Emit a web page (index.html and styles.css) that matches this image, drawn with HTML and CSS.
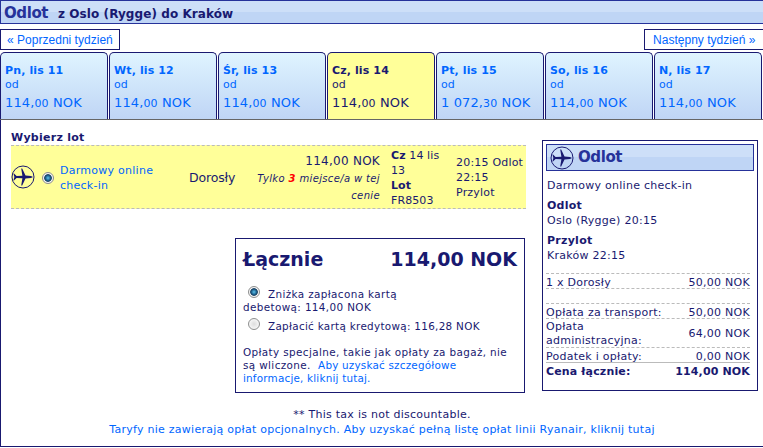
FILE: index.html
```html
<!DOCTYPE html>
<html lang="pl">
<head>
    <meta charset="UTF-8">
    <title>Odlot z Oslo (Rygge) do Kraków</title>
    <link rel="stylesheet" href="styles.css">
</head>
<body>
    <svg class="defs">
        <symbol id="plane" viewBox="0 0 24 24">
            <circle cx="12" cy="12" r="11" fill="none" stroke="#191970" stroke-width="1"/>
            <path fill="#191970" d="M22 12 20 11 14.5 10.6 11.2 3.6 10.2 3.4 11.4 10.7 5.6 11 3 8.6 2.4 8.6 3.4 12 2.4 15.4 3 15.4 5.6 13 11.4 13.3 10.2 20.6 11.2 20.4 14.5 13.4 20 13z"/>
        </symbol>
    </svg>

    <h1 class="bar"><span class="bar-title">Odlot</span><span class="route">z Oslo (Rygge) do Kraków</span></h1>

    <div class="weeks">
        <a class="week prev"><span>« Poprzedni tydzień</span></a>
        <a class="week next"><span>Następny tydzień »</span></a>
    </div>

    <div class="tabs">
        <div class="tab"><b>Pn, lis 11</b><span class="from">od</span><span class="fare">114,<small>00</small> NOK</span></div>
        <div class="tab"><b>Wt, lis 12</b><span class="from">od</span><span class="fare">114,<small>00</small> NOK</span></div>
        <div class="tab"><b>Śr, lis 13</b><span class="from">od</span><span class="fare">114,<small>00</small> NOK</span></div>
        <div class="tab active"><b>Cz, lis 14</b><span class="from">od</span><span class="fare">114,<small>00</small> NOK</span></div>
        <div class="tab"><b>Pt, lis 15</b><span class="from">od</span><span class="fare">1 072,<small>30</small> NOK</span></div>
        <div class="tab"><b>So, lis 16</b><span class="from">od</span><span class="fare">114,<small>00</small> NOK</span></div>
        <div class="tab"><b>N, lis 17</b><span class="from">od</span><span class="fare">114,<small>00</small> NOK</span></div>
    </div>

    <div class="panel">
        <div class="columns">
            <div class="left">
                <h2>Wybierz lot</h2>
                <div class="flight">
                    <svg class="plane"><use href="#plane"/></svg>
                    <span class="radio on"></span>
                    <a class="kind">Darmowy online<br>check-in</a>
                    <span class="who">Dorosły</span>
                    <div class="price">114,00 NOK<br><i>Tylko <b>3</b> miejsce/a w tej<br>cenie</i></div>
                    <div class="date"><b>Cz</b> 14 lis<br>13<br><b>Lot</b><br>FR8503</div>
                    <div class="times">20:15 Odlot<br>22:15<br>Przylot</div>
                </div>

                <div class="total">
                    <div class="total-head"><span>Łącznie</span><span>114,00 NOK</span></div>
                    <div class="pay"><span class="radio on"></span><span>Zniżka zapłacona kartą</span><br><span>debetową: 114,00 NOK</span></div>
                    <div class="pay credit"><span class="radio"></span><span>Zapłacić kartą kredytową: 116,28 NOK</span></div>
                    <p class="extra">Opłaty specjalne, takie jak opłaty za bagaż, nie<br>są wliczone.&nbsp; <a>Aby uzyskać szczegółowe<br>informacje, kliknij tutaj.</a></p>
                </div>
            </div>

            <div class="summary">
                <div class="summary-head"><svg class="plane"><use href="#plane"/></svg><span>Odlot</span></div>
                <p>Darmowy online check-in</p>
                <p><b>Odlot</b><br>Oslo (Rygge) 20:15</p>
                <p><b>Przylot</b><br>Kraków 22:15</p>
                <div class="rows">
                    <div class="row"><span>1 x Dorosły</span><span>50,00 NOK</span></div>
                    <div class="row empty"></div>
                    <div class="row"><span>Opłata za transport:</span><span>50,00 NOK</span></div>
                    <div class="row tall"><span>Opłata<br>administracyjna:</span><span>64,00 NOK</span></div>
                    <div class="row last"><span>Podatek i opłaty:</span><span>0,00 NOK</span></div>
                    <div class="row sum"><span>Cena łącznie:</span><span>114,00 NOK</span></div>
                </div>
            </div>
        </div>

        <div class="notes">
            <div class="note">** This tax is not discountable.</div>
            <a class="terms">Taryfy nie zawierają opłat opcjonalnych. Aby uzyskać pełną listę opłat linii Ryanair, kliknij tutaj</a>
        </div>
    </div>
</body>
</html>
```

FILE: styles.css
```css
* {
    margin: 0;
    padding: 0;
    box-sizing: border-box;
}

body {
    width: 763px;
    height: 448px;
    overflow: hidden;
    background: #fff;
    color: #191970;
    font: 11px/15px Verdana, "DejaVu Sans", sans-serif;
    letter-spacing: 0.26px;
    white-space: nowrap;
}

a {
    color: #0066ff;
}

.defs {
    display: none;
}

.bar {
    display: flex;
    align-items: baseline;
    height: 24px;
    padding-left: 3px;
    border: 1px solid #26329a;
    border-right: 0;
    background: linear-gradient(#cddff8 50%, #bfd5f5 50%);
    font-size: 12px;
    line-height: 24px;
    letter-spacing: 0.08px;
}

.bar-title {
    width: 54px;
    font-size: 15px;
    letter-spacing: -0.4px;
    color: #26329a;
}

.weeks {
    display: flex;
    justify-content: space-between;
    padding-top: 5px;
    height: 28px;
}

.week {
    width: 120px;
    height: 21px;
    padding-left: 6px;
    border: 1px solid #191970;
    font: 12px/20px "Liberation Sans", Arial, sans-serif;
    letter-spacing: 0.02px;
}

.next {
    width: 119px;
    padding-left: 8px;
    border-right: 0;
}

.tabs {
    display: flex;
    gap: 1px;
    height: 68px;
    border-bottom: 1px solid #666;
}

.tab {
    display: flex;
    flex-direction: column;
    width: 108px;
    padding: 10px 0 0 4px;
    border: 1px solid #191970;
    border-bottom: 0;
    border-radius: 5px 5px 0 0;
    background: linear-gradient(#dff4ff, #bfd5f5);
    color: #0066ff;
    letter-spacing: 0.12px;
}

.tab.active {
    background: #ffff99;
    color: #191970;
}

.from {
    line-height: 14px;
    letter-spacing: 0;
}

.fare {
    font-size: 13px;
    line-height: 21px;
}

.fare small {
    font-size: 11px;
}

.panel {
    height: 327px;
    border-left: 1px solid #191970;
    border-bottom: 1px solid #191970;
}

.columns {
    display: flex;
    height: 287px;
    padding: 10px 0 0 10px;
}

.left {
    width: 515px;
    margin-right: 16px;
}

h2 {
    font-size: 11px;
    line-height: 15px;
}

.flight {
    display: flex;
    align-items: center;
    height: 64px;
    border-top: 1px dashed #bbb;
    border-bottom: 1px dashed #bbb;
    background: #ffff99;
}

.plane {
    width: 24px;
    height: 24px;
}

.radio {
    display: inline-block;
    width: 12px;
    height: 12px;
    border: 1px solid #8e8f8f;
    border-radius: 50%;
    background: radial-gradient(circle, #ddd, #f4f4f4 65%);
}

.radio.on {
    background: radial-gradient(circle at 50% 50%, #5cc4ee 0, #1b5c88 2.6px, #123a5c 3.4px, #f4f4f4 4.2px);
}

.flight .radio {
    margin: 1px 6px 0 7px;
}

.kind {
    width: 129px;
    padding-top: 1px;
}

.who {
    width: 60px;
    font-size: 12.5px;
    letter-spacing: -0.15px;
}

.price {
    width: 131px;
    padding-top: 3px;
    font-size: 12px;
    line-height: 17px;
    text-align: right;
}

.price i {
    font-size: 10px;
    letter-spacing: 0.36px;
}

.price b {
    color: #f00;
}

.date {
    width: 76px;
    padding: 1px 0 0 11px;
    letter-spacing: 0.1px;
}

.times {
    padding-top: 1px;
    letter-spacing: 0.2px;
}

.total {
    width: 290px;
    height: 155px;
    margin: 29px 0 0 224px;
    padding: 7px;
    border: 1px solid #191970;
    font-size: 10.4px;
    line-height: 13px;
    letter-spacing: 0.38px;
}

.total-head {
    display: flex;
    justify-content: space-between;
    height: 40px;
    font-size: 19px;
    font-weight: bold;
    line-height: 27px;
    letter-spacing: 0;
}

.pay {
    height: 32px;
}

.pay .radio {
    margin: 0 8px 0 5px;
}

.credit {
    height: 17px;
    letter-spacing: 0.3px;
}

.extra {
    margin-top: 11px;
}

.extra a {
    letter-spacing: 0.2px;
}

.summary {
    width: 216px;
    height: 251px;
    margin-top: 10px;
    padding: 3px;
    border: 1px solid #191970;
}

.summary-head {
    display: flex;
    align-items: center;
    height: 27px;
    margin-bottom: 7px;
    padding-left: 3px;
    border: 1px solid #26329a;
    background: linear-gradient(#cddff8 50%, #bfd5f5 50%);
    color: #26329a;
    font-size: 15px;
    font-weight: bold;
    letter-spacing: -0.4px;
}

.summary-head span {
    margin-left: 4px;
}

.summary p {
    margin: 0 0 5px 1px;
}

.rows {
    width: 204px;
    margin-top: 10px;
    border-top: 1px dashed #bbb;
}

.row {
    display: flex;
    justify-content: space-between;
    align-items: center;
    height: 15px;
    padding-top: 2px;
    border-bottom: 1px dashed #bbb;
}

.tall {
    height: 29px;
    line-height: 14px;
}

.last {
    border-bottom-style: solid;
}

.sum {
    height: 17px;
    padding-top: 0;
    border-bottom: 0;
    font-weight: bold;
    letter-spacing: 0.15px;
}

.notes {
    text-align: center;
}
```
